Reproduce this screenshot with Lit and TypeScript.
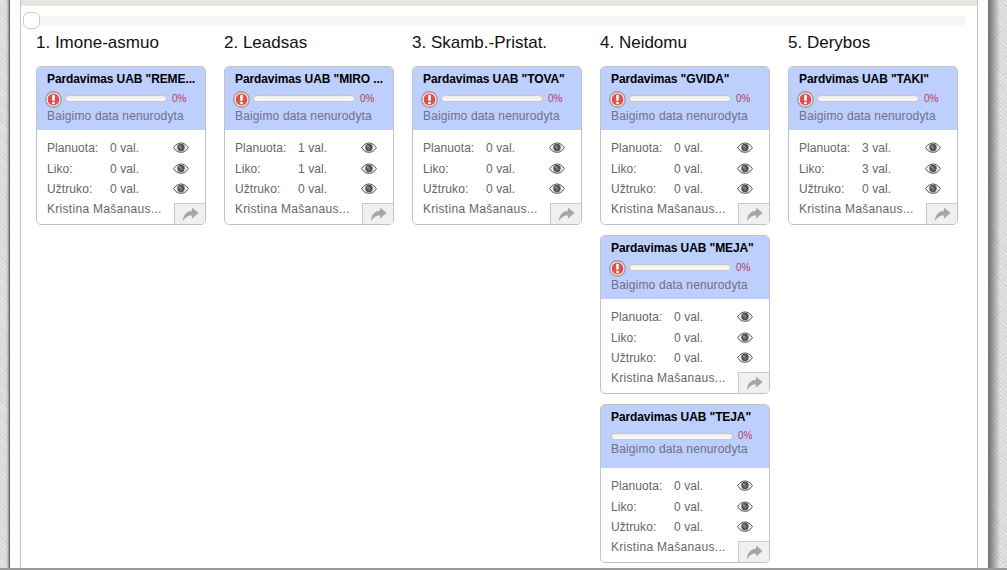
import { LitElement, html, css, svg } from "lit";
import { customElement } from "lit/decorators.js";

interface Card { title: string; warn: boolean; plan: number; left: number; }
interface Col { name: string; cards: Card[]; }

const COLS: Col[] = [
  { name: "1. Imone-asmuo", cards: [{ title: 'Pardavimas UAB "REME...', warn: true, plan: 0, left: 0 }] },
  { name: "2. Leadsas", cards: [{ title: 'Pardavimas UAB "MIRO ...', warn: true, plan: 1, left: 1 }] },
  { name: "3. Skamb.-Pristat.", cards: [{ title: 'Pardavimas UAB "TOVA"', warn: true, plan: 0, left: 0 }] },
  { name: "4. Neidomu", cards: [
    { title: 'Pardavimas "GVIDA"', warn: true, plan: 0, left: 0 },
    { title: 'Pardavimas UAB "MEJA"', warn: true, plan: 0, left: 0 },
    { title: 'Pardavimas UAB "TEJA"', warn: false, plan: 0, left: 0 },
  ] },
  { name: "5. Derybos", cards: [{ title: 'Pardvimas UAB "TAKI"', warn: true, plan: 3, left: 3 }] },
];

const eye = svg`<svg class="eye" width="16" height="12" viewBox="0 0 16 12">
  <ellipse cx="8" cy="7.6" rx="6.5" ry="3.4" fill="#d8d8d8"/>
  <path d="M0.6 5.6 C3 2.2 5.5 1 8 1 C10.5 1 13 2.2 15.4 5.6 C13 9.2 10.5 10.2 8 10.2 C5.5 10.2 3 9.2 0.6 5.6 Z" fill="#f2f2f2" stroke="#555" stroke-width="1"/>
  <circle cx="8" cy="5.5" r="3.7" fill="#505058"/>
  <circle cx="8" cy="6" r="1.7" fill="#70708a"/>
  <circle cx="6.9" cy="4.2" r="0.7" fill="#d5d5d5"/>
</svg>`;

const share = svg`<svg width="17" height="15" viewBox="0 0 17 15">
  <path d="M10 0.5 L16.5 6 L10 11.5 L10 8.4 C6.4 8.2 3.2 9.8 1 14.5 C1 8.2 4.2 4.2 10 3.8 Z" fill="#a6a6a6"/>
</svg>`;

const warnIcon = svg`<svg class="warn" width="17" height="17" viewBox="0 0 17 17">
  <circle cx="8.5" cy="8.5" r="7.8" fill="#d9534f" stroke="#a0a0a0" stroke-width="1.3"/>
  <circle cx="8.5" cy="8.5" r="6.5" fill="none" stroke="#f6f6f6" stroke-width="1.2"/>
  <rect x="7.2" y="3.8" width="2.6" height="6" rx="0.7" fill="#fff"/>
  <rect x="7.2" y="10.8" width="2.6" height="2.4" rx="0.7" fill="#fff"/>
</svg>`;

@customElement("app-root")
export class AppRoot extends LitElement {
  static styles = css`
    :host {
      display: block;
      height: 570px;
      overflow: hidden;
      font-family: "Liberation Sans", Arial, sans-serif;
      background-color: #dcdcdc;
      background-image:
        linear-gradient(90deg, transparent 0 6px, rgba(0,0,0,0.15) 8px, rgba(0,0,0,0.4) 9px, transparent 9px),
        linear-gradient(90deg, transparent 988px, rgba(0,0,0,0.5) 988px, transparent 1000px),
        repeating-linear-gradient(45deg, #d6d6d6 0 1px, #e4e4e4 1px 2px, #dcdcdc 2px 3px);
    }
    .frame {
      height: 568px;
      margin: 0 19px 0 9px;
      box-sizing: border-box;
      padding: 0 10px;
      background: #fdfdfd;
      border-left: 1px solid #666;
    }
    .page {
      height: 100%;
      background: #fff;
      border-left: 1px solid #c4c4c4;
      border-right: 1px solid #c4c4c4;
      box-sizing: border-box;
      overflow: hidden;
    }
    .bottom { height: 2px; background: #999; }
    .top { height: 6px; background: #e8e4de; }
    .scroll { height: 10px; margin: 10px 11px 0 2px; background: #f6f6f6; border-radius: 5px; position: relative; }
    .thumb {
      position: absolute; left: 0; top: -4px; width: 17px; height: 17px;
      box-sizing: border-box; background: #fff; border: 1px solid #ccc; border-radius: 6px;
    }
    .board { display: flex; gap: 18px; padding: 0 0 0 15px; }
    .col { width: 170px; flex: none; }
    .col h2 {
      margin: 0; height: 40px; padding-top: 6px; box-sizing: border-box; white-space: nowrap;
      font-weight: 400; font-size: 17px; line-height: 22px; color: #111;
    }
    .col-body { display: flex; flex-direction: column; gap: 10px; }
    .card {
      width: 170px; height: 159px; box-sizing: border-box;
      border: 1px solid #c2c2c2; border-radius: 5px; overflow: hidden; background: #fff;
      display: flex; flex-direction: column; position: relative;
    }
    .head { height: 63px; flex: none; background: #bdcffc; padding: 5px 0 0 10px; box-sizing: border-box; }
    .title {
      font-size: 12px; font-weight: 700; line-height: 14px; color: #000;
      white-space: nowrap; letter-spacing: -0.1px;
    }
    .progress { display: flex; align-items: center; height: 20px; margin: 3px 0 0 -2px; }
    .warn { flex: none; margin: 1px 3px 0 0; width: 17px; height: 17px; }
    .bar {
      flex: none; width: 102px; height: 7px; box-sizing: border-box; margin-top: -1px;
      background: linear-gradient(#eeeeee, #fafafa); border: 1px solid #c6c6c6; border-radius: 4px;
    }
    .pct { font-size: 10px; color: #b5405a; margin: -1px 0 0 5px; line-height: 10px; }
    .nowarn { height: 15px; }
    .nowarn .bar { width: 122px; margin: 3px 0 0 2px; }
    .nowarn .pct { margin-top: 2px; }
    .due { font-size: 12px; line-height: 14px; color: #70708a; white-space: nowrap; letter-spacing: 0.15px; }
    .rows { padding: 7.9px 0 0 10px; }
    .row { display: flex; align-items: center; height: 20.5px; font-size: 12px; color: #666; letter-spacing: 0.08px; }
    .label { width: 63px; flex: none; }
    .val { width: 63px; flex: none; }
    .eye { display: block; flex: none; }
    .owner {
      font-size: 12px; line-height: 14px; color: #666; padding: 3px 0 0 10px;
      white-space: nowrap; letter-spacing: 0.3px;
    }
    .go {
      position: absolute; right: 0; bottom: 0; width: 31px; height: 21px; box-sizing: border-box;
      background: #f0f0f0; border-top: 1px solid #c8c8c8; border-left: 1px solid #c8c8c8;
      display: flex; align-items: center; justify-content: center;
    }
  `;

  renderCard(c: Card) {
    return html`<div class="card">
      <div class="head">
        <div class="title">${c.title}</div>
        <div class="progress ${c.warn ? "" : "nowarn"}">
          ${c.warn ? warnIcon : ""}
          <div class="bar"></div>
          <span class="pct">0%</span>
        </div>
        <div class="due">Baigimo data nenurodyta</div>
      </div>
      <div class="rows">
        <div class="row"><span class="label">Planuota:</span><span class="val">${c.plan} val.</span>${eye}</div>
        <div class="row"><span class="label">Liko:</span><span class="val">${c.left} val.</span>${eye}</div>
        <div class="row"><span class="label">Užtruko:</span><span class="val">0 val.</span>${eye}</div>
      </div>
      <div class="owner">Kristina Mašanaus...</div>
      <div class="go">${share}</div>
    </div>`;
  }

  render() {
    return html`<div class="frame"><div class="page">
      <div class="top"></div>
      <div class="scroll"><div class="thumb"></div></div>
      <div class="board">
        ${COLS.map((col) => html`<div class="col">
          <h2>${col.name}</h2>
          <div class="col-body">${col.cards.map((c) => this.renderCard(c))}</div>
        </div>`)}
      </div>
    </div></div><div class="bottom"></div>`;
  }
}
